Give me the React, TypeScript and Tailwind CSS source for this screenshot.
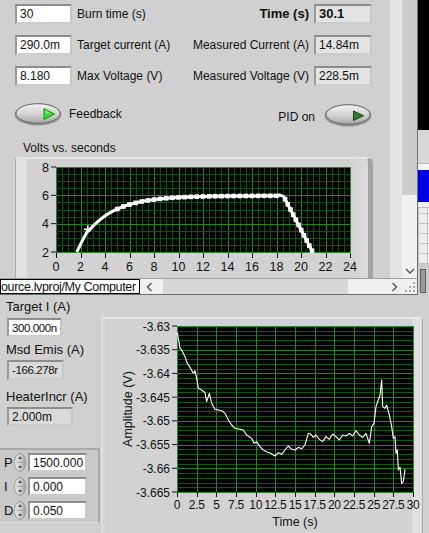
import React from "react";

// LabVIEW style front panels: a small top window overlapping a larger one

const boxFrame =
  "flex items-center border-2 border-t-[#8c8c8c] border-l-[#999999] border-r-[#c6c6c6] border-b-[#cccccc] pl-[3px] whitespace-nowrap overflow-hidden";

function Led({ on }: { on: boolean }) {
  const id = on ? "ledOn" : "ledOff";
  return (
    <svg width="48" height="24" viewBox="0 0 48 24" className="block">
      <defs>
        <linearGradient id={id} x1="0" y1="0" x2="0" y2="1">
          <stop offset="0" stopColor="#f2f2f2" />
          <stop offset="0.55" stopColor="#d2d2d2" />
          <stop offset="1" stopColor="#a4a4a4" />
        </linearGradient>
      </defs>
      <ellipse cx="24" cy="12.5" rx="23.5" ry="11" fill="#959595" />
      <ellipse cx="24" cy="11.5" rx="22" ry="9.8" fill={`url(#${id})`} stroke="#666" strokeWidth="1" />
      <path
        d={on ? "M30 6.5 L30 17.5 L40.5 12 Z" : "M29.5 8 L29.5 17.5 L39.5 12.7 Z"}
        fill={on ? "#39e039" : "#2d7d2d"}
        stroke={on ? "#1b8a1b" : "#1a3f1a"}
        strokeWidth="1"
        strokeLinejoin="round"
      />
      {on && <path d="M31.5 8.5 L31.5 12 L36 11 Z" fill="#9bf59b" opacity="0.7" />}
    </svg>
  );
}

function Spinner() {
  return (
    <svg width="12" height="19" viewBox="0 0 12 19" className="block">
      <defs>
        <linearGradient id="spin" x1="0" y1="0" x2="1" y2="0">
          <stop offset="0" stopColor="#f0f0f0" />
          <stop offset="1" stopColor="#a9a9a9" />
        </linearGradient>
      </defs>
      <ellipse cx="6" cy="9.5" rx="5.5" ry="9" fill="url(#spin)" stroke="#8a8a8a" strokeWidth="0.8" />
      <path d="M6 3.2 L4 6 L8 6 Z" fill="#555" />
      <path d="M6 15.8 L4 13 L8 13 Z" fill="#555" />
      <line x1="1.5" y1="9.5" x2="10.5" y2="9.5" stroke="#9a9a9a" strokeWidth="0.6" />
    </svg>
  );
}

function Chevron({ dir }: { dir: "down" | "left" | "right" }) {
  if (dir === "down")
    return (
      <svg width="10" height="6" className="block">
        <polyline points="1,1 5,5 9,1" fill="none" stroke="#5f5f5f" strokeWidth="1.6" />
      </svg>
    );
  return (
    <svg width="7" height="10" className="block">
      <polyline
        points={dir === "left" ? "5.5,1 1.5,5 5.5,9" : "1.5,1 5.5,5 1.5,9"}
        fill="none"
        stroke="#5f5f5f"
        strokeWidth="1.6"
      />
    </svg>
  );
}

function Grip() {
  const dots = [
    [9, 1],
    [9, 5],
    [5, 5],
    [9, 9],
    [5, 9],
    [1, 9],
  ];
  return (
    <svg width="12" height="12" className="block">
      {dots.map(([x, y]) => (
        <rect key={`${x}-${y}`} x={x} y={y} width="2" height="2" fill="#a8a8a8" />
      ))}
    </svg>
  );
}

// ---------- graph 1 : Volts vs. seconds ----------
const g1x = (t: number) => 56 + t * 12.25;
const g1y = (v: number) => 167 + (8 - v) * (85 / 6);

function buildVolts() {
  const pts: [number, number][] = [
    [1.7, 2],
    [2.15, 2.8],
    [2.55, 3.45],
  ];
  for (let t = 2.7; t <= 18.2; t += 0.3) {
    pts.push([t, 5.97 - 2.55 * Math.exp(-(t - 2.6) / 2.4)]);
  }
  pts.push([18.3, 6.02], [18.6, 5.9], [20.95, 2]);
  return pts;
}

function VoltsGraph() {
  const data = buildVolts();
  const line = data.map(([t, v]) => `${g1x(t)},${g1y(v)}`).join(" ");
  const markers: [number, number][] = [];
  for (let t = 5; t <= 18.3; t += 0.5) markers.push([t, 5.97 - 2.55 * Math.exp(-(t - 2.6) / 2.4)]);
  for (let t = 18.7; t <= 20.9; t += 0.22) markers.push([t, 5.9 - ((t - 18.6) / 2.35) * 3.9]);
  const vLines = Array.from({ length: 49 }, (_, i) => i);
  const hLines = Array.from({ length: 13 }, (_, j) => j);
  const xLabels = Array.from({ length: 13 }, (_, k) => k * 2);
  const yLabels = [8, 6, 4, 2];
  return (
    <svg width="352" height="123" viewBox="16 159 352 123" className="block">
      <rect x="56" y="167" width="294" height="85" fill="#010601" />
      {vLines.map((i) => {
        const x = Math.round(56 + (i * 294) / 48) + 0.5;
        return (
          <line
            key={`v${i}`}
            x1={x}
            x2={x}
            y1="167"
            y2="252"
            stroke={i % 4 === 0 ? "#2a822a" : "#134e13"}
            strokeWidth="1"
          />
        );
      })}
      {hLines.map((j) => {
        const y = Math.round(167 + (j * 85) / 12) + 0.5;
        return (
          <line
            key={`h${j}`}
            x1="56"
            x2="350"
            y1={y}
            y2={y}
            stroke={j % 4 === 0 ? "#2a822a" : "#134e13"}
            strokeWidth="1"
          />
        );
      })}
      <polyline points={line} fill="none" stroke="#fff" strokeWidth="3" strokeLinejoin="round" />
      {markers.map(([t, v], i) => (
        <rect key={`m${i}`} x={g1x(t) - 2.3} y={g1y(v) - 2.3} width="4.6" height="4.6" fill="#fff" />
      ))}
      <path d={`M${g1x(2.6) - 4} ${g1y(3.6)} h8 M${g1x(2.6)} ${g1y(3.6) - 4} v8`} stroke="#fff" strokeWidth="1.5" />
      {yLabels.map((v) => (
        <g key={`yl${v}`}>
          <line x1="51" x2="56" y1={g1y(v)} y2={g1y(v)} stroke="#111" strokeWidth="1" />
          <text x="49" y={g1y(v) + 4.5} fontSize="12.5" textAnchor="end" fill="#111">
            {v}
          </text>
        </g>
      ))}
      {xLabels.map((t) => (
        <g key={`xl${t}`}>
          <line x1={Math.round(g1x(t)) + 0.5} x2={Math.round(g1x(t)) + 0.5} y1="253" y2="258" stroke="#111" />
          <text x={g1x(t)} y="271" fontSize="12.5" textAnchor="middle" fill="#111">
            {t}
          </text>
        </g>
      ))}
    </svg>
  );
}

// ---------- graph 2 : Amplitude ----------
const trace: [number, number][] = [
  [232, 68], [240, 115], [245, 120], [255, 140], [262, 160], [270, 172], [280, 190], [285, 182],
  [290, 205], [295, 235], [305, 240], [315, 248], [320, 275], [328, 250], [335, 280], [345, 298],
  [365, 302], [375, 310], [385, 330], [395, 345], [405, 355], [420, 358], [430, 360], [440, 375],
  [455, 385], [462, 400], [470, 395], [480, 410], [490, 420], [500, 425], [512, 430], [525, 438],
  [535, 428], [545, 433], [555, 420], [565, 408], [575, 418], [585, 420], [595, 412], [605, 416],
  [615, 405], [625, 370], [632, 372], [640, 382], [648, 375], [658, 388], [668, 395], [678, 380],
  [688, 388], [698, 372], [708, 380], [718, 390], [728, 375], [738, 378], [748, 370], [758, 378],
  [768, 362], [778, 375], [788, 382], [798, 370], [808, 400], [815, 350], [822, 340], [828, 290],
  [835, 270], [840, 255], [845, 210], [848, 290], [855, 295], [860, 285], [868, 315], [875, 350],
  [880, 385], [885, 380], [888, 430], [892, 420], [895, 480], [900, 472], [905, 520], [910, 515],
  [915, 478],
];

function AmplitudeGraph() {
  const left = 177;
  const right = 413;
  const top = 326;
  const bottom = 492;
  const yLabels = ["-3.63", "-3.635", "-3.64", "-3.645", "-3.65", "-3.655", "-3.66", "-3.665"];
  const xLabels = ["0", "2.5", "5", "7.5", "10", "12.5", "15", "17.5", "20", "22.5", "25", "27.5", "30"];
  const pts = trace.map(([a, b]) => `${100 + a / 3},${310 + b / 3}`).join(" ");
  return (
    <svg width="319" height="214" viewBox="103 319 319 214" className="block">
      <rect x={left} y={top} width={right - left} height={bottom - top} fill="#010601" />
      {Array.from({ length: 36 }, (_, j) => {
        const y = Math.round(top + (j * (bottom - top)) / 35) + 0.5;
        return (
          <line
            key={`h${j}`}
            x1={left}
            x2={right}
            y1={y}
            y2={y}
            stroke={j % 5 === 0 ? "#2a822a" : "#155515"}
            strokeWidth="1"
          />
        );
      })}
      {Array.from({ length: 13 }, (_, k) => {
        const x = Math.round(left + (k * (right - left)) / 12) + 0.5;
        return <line key={`v${k}`} x1={x} x2={x} y1={top} y2={bottom} stroke="#2a822a" strokeWidth="1" />;
      })}
      <polyline points={pts} fill="none" stroke="#fff" strokeWidth="1.1" strokeLinejoin="round" />
      {yLabels.map((l, j) => {
        const y = top + (j * (bottom - top)) / 7;
        return (
          <g key={l}>
            <line x1="172" x2={left} y1={y} y2={y} stroke="#111" />
            <text x="170" y={y + 4.5} fontSize="12" textAnchor="end" fill="#111">
              {l}
            </text>
          </g>
        );
      })}
      {xLabels.map((l, k) => {
        const x = left + (k * (right - left)) / 12;
        return (
          <g key={l}>
            <line x1={Math.round(x) + 0.5} x2={Math.round(x) + 0.5} y1={bottom} y2={bottom + 5} stroke="#111" />
            <text x={x} y="509" fontSize="12" textAnchor="middle" fill="#111" letterSpacing="-0.3">
              {l}
            </text>
          </g>
        );
      })}
      <text x="295" y="526" fontSize="12.5" textAnchor="middle" fill="#111">
        Time (s)
      </text>
      <text x="132" y="409" fontSize="12.5" textAnchor="middle" fill="#111" transform="rotate(-90 132 409)">
        Amplitude (V)
      </text>
    </svg>
  );
}

// ---------- windows ----------
function FrontPanel() {
  return (
    <div className="flex h-[295px] w-[418px] flex-col border-r border-b border-[#6f6f6f]">
      <div className="flex h-[278px]">
        <div className="h-full w-[390px] overflow-hidden bg-[#d0d0d0] pt-[4px] pr-[18px] pl-[15px]">
          <div className="flex h-[20px] items-center">
            <div className={`${boxFrame} h-[20px] w-[57px] bg-white`}>30</div>
            <span className="ml-[5px]">Burn time (s)</span>
            <span className="ml-auto text-[13px] font-bold">Time (s)</span>
            <div className={`${boxFrame} ml-[5px] h-[20px] w-[58px] bg-[#e3e3e3] text-[13px] font-bold`}>30.1</div>
          </div>
          <div className="mt-[11px] flex h-[20px] items-center">
            <div className={`${boxFrame} h-[20px] w-[57px] bg-white`}>290.0m</div>
            <span className="ml-[5px]">Target current (A)</span>
            <span className="ml-auto">Measured Current (A)</span>
            <div className={`${boxFrame} ml-[5px] h-[20px] w-[58px] bg-[#e3e3e3]`}>14.84m</div>
          </div>
          <div className="mt-[11px] flex h-[20px] items-center">
            <div className={`${boxFrame} h-[20px] w-[57px] bg-white`}>8.180</div>
            <span className="ml-[5px]">Max Voltage (V)</span>
            <span className="ml-auto">Measured Voltage (V)</span>
            <div className={`${boxFrame} ml-[5px] h-[20px] w-[58px] bg-[#e3e3e3]`}>228.5m</div>
          </div>
          <div className="mt-[16px] flex h-[25px] items-start">
            <div className="-ml-[1px]">
              <Led on />
            </div>
            <span className="mt-[5px] ml-[7px]">Feedback</span>
            <span className="mt-[8px] ml-auto mr-[9px]">PID on</span>
            <div className="mt-[1px]">
              <Led on={false} />
            </div>
          </div>
          <div className="mt-[14px] ml-[8px] h-[14px]">Volts vs. seconds</div>
          <div className="mt-[2px] h-[130px] w-[358px] rounded-tl-[3px] rounded-tr-[7px] border-t-2 border-r-[5px] border-l border-t-[#e4e4e4] border-r-[#a2a2a2] border-l-[#a9a9a9] bg-[linear-gradient(90deg,#e2e2e2_0,#e2e2e2_9px,#d2d2d2_12px,#d2d2d2_95%,#dbdbdb_100%)]">
            <VoltsGraph />
          </div>
        </div>
        <div className="w-[12px] bg-[#e4e4e4]" />
        <div className="flex w-[15px] flex-col">
          <div className="h-[195px] bg-[#cdcdcd]" />
          <div className="flex flex-1 flex-col items-center justify-end bg-[#f0f0f0] pb-[4px]">
            <Chevron dir="down" />
          </div>
        </div>
      </div>
      <div className="flex h-[16px] border-t border-[#a0a0a0] bg-[#f0f0f0]">
        <div className="flex h-full w-[140px] items-center overflow-hidden border border-black bg-white text-[12.5px] tracking-[-0.35px] whitespace-nowrap">
          ource.lvproj/My Computer
        </div>
        <div className="flex w-[18px] items-center justify-center">
          <Chevron dir="left" />
        </div>
        <div className="w-[5px]" />
        <div className="w-[185px] bg-[#d6d6d6]" />
        <div className="w-[38px]" />
        <div className="flex w-[16px] items-center justify-center">
          <Chevron dir="right" />
        </div>
        <div className="flex w-[15px] items-end justify-end pr-[1px] pb-[1px]">
          <Grip />
        </div>
      </div>
    </div>
  );
}

function BackWindow() {
  return (
    <div className="flex h-[295px] w-[11px] flex-col">
      <div className="h-[130px] bg-black" />
      <div className="h-[33px] bg-[#d8d8d8]" />
      <div className="h-[7px] border-t border-[#bcbcbc] bg-[#f4f4f4]" />
      <div className="h-[32px] bg-[#0000e6]" />
      <div className="h-[6px] border-b border-[#bdbdbd] bg-[#f2f2f2]" />
      <div className="h-[56px] bg-[repeating-linear-gradient(0deg,#c4c4c4_0_1px,transparent_1px_10px),repeating-linear-gradient(90deg,#c4c4c4_0_1px,#ececec_1px_9px)]" />
      <div className="flex flex-1 items-start bg-[#cbcbcb] pt-[5px] pl-[2px]">
        <div className="h-[24px] w-[6px] border border-[#5e5e5e] bg-[#9a9a9a]" />
      </div>
    </div>
  );
}

function PidRow({ label, value }: { label: string; value: string }) {
  return (
    <div className="flex h-[19px] items-center">
      <span className="w-[14px] pl-[4px] text-[13px]">{label}</span>
      <Spinner />
      <div className={`${boxFrame} ml-[2px] h-[19px] w-[59px] bg-white pl-[2px]`}>{value}</div>
    </div>
  );
}

function BottomPanel() {
  return (
    <div className="flex h-[238px] shrink-0 bg-[#d0d0d0]">
      <div className="flex w-[101px] flex-col pt-[5px]">
        <div className="ml-[6px] h-[14px] text-[13px]">Target I (A)</div>
        <div className={`${boxFrame} mt-[4px] ml-[7px] h-[19px] w-[55px] bg-white pl-[2px] text-[11.5px] tracking-[-0.4px]`}>
          300.000n
        </div>
        <div className="mt-[6px] ml-[6px] h-[14px] text-[13px]">Msd Emis (A)</div>
        <div className={`${boxFrame} mt-[3px] ml-[7px] h-[20px] w-[57px] bg-[#d9d9d9] pl-[2px] text-[11.5px] tracking-[-0.4px]`}>
          -166.278r
        </div>
        <div className="mt-[10px] ml-[6px] h-[14px] text-[13px]">HeaterIncr (A)</div>
        <div className={`${boxFrame} mt-[3px] ml-[7px] h-[19px] w-[66px] bg-[#d9d9d9] pl-[2px]`}>2.000m</div>
        <div className="mt-[22px] flex h-[75px] w-[100px] flex-col gap-[5px] border-t-2 border-r-2 border-b border-t-[#a9a9a9] border-r-[#a9a9a9] border-b-[#e2e2e2] bg-[#c9c9c9] pt-[3px]">
          <PidRow label="P" value="1500.000" />
          <PidRow label="I" value="0.000" />
          <PidRow label="D" value="0.050" />
        </div>
      </div>
      <div className="mt-[22px] h-[216px] w-[322px] border-t-2 border-r border-l-2 border-t-[#e6e6e6] border-r-[#a8a8a8] border-l-[#dedede] bg-[linear-gradient(90deg,#d6d6d6_0,#d2d2d2_4px,#d2d2d2_calc(100%-10px),#e0e0e0_calc(100%-9px),#e0e0e0_100%)]">
        <AmplitudeGraph />
      </div>
    </div>
  );
}

export default function App() {
  return (
    <div className="flex h-[533px] w-[429px] flex-col overflow-hidden bg-[#d0d0d0] font-['Liberation_Sans',Arial,sans-serif] text-[12px] leading-[14px] text-[#111]">
      <div className="flex h-[295px] shrink-0">
        <FrontPanel />
        <BackWindow />
      </div>
      <BottomPanel />
    </div>
  );
}
